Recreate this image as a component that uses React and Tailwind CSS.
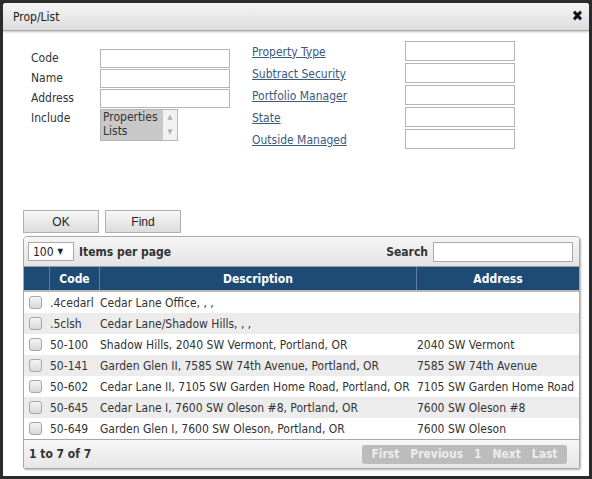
import React from "react";

const rows = [
  [".4cedarl", "Cedar Lane Office, , ,", ""],
  [".5clsh", "Cedar Lane/Shadow Hills, , ,", ""],
  ["50-100", "Shadow Hills, 2040 SW Vermont, Portland, OR", "2040 SW Vermont"],
  ["50-141", "Garden Glen II, 7585 SW 74th Avenue, Portland, OR", "7585 SW 74th Avenue"],
  ["50-602", "Cedar Lane II, 7105 SW Garden Home Road, Portland, OR", "7105 SW Garden Home Road"],
  ["50-645", "Cedar Lane I, 7600 SW Oleson #8, Portland, OR", "7600 SW Oleson #8"],
  ["50-649", "Garden Glen I, 7600 SW Oleson, Portland, OR", "7600 SW Oleson"],
];

const font = "font-['DejaVu_Sans_Condensed','DejaVu_Sans',sans-serif]";

function Input({ w }) {
  return <div className={`${w} h-[20px] border border-[#b5b5b5] bg-white`} />;
}

export default function App() {
  return (
    <div className={`w-[592px] h-[479px] bg-[#2b2b2b] p-[3px] ${font} text-[#333]`}>
      <div className="h-full bg-white flex flex-col rounded-t-[3px] overflow-hidden">
        {/* title bar */}
        <div className="h-[28px] shrink-0 flex items-center justify-between pl-[10px] pr-[6px] bg-gradient-to-b from-[#f5f5f5] to-[#dddddd] border-b border-[#a9a9a9] shadow-[0_1px_2px_rgba(0,0,0,0.25)]">
          <span className="text-[12px] text-[#222]">Prop/List</span>
          <span className="text-[15px] font-bold text-[#111] leading-none">✖</span>
        </div>

        {/* form */}
        <div className="flex h-[179px] shrink-0">
          <div className="pl-[28px] pt-[17px] flex flex-col gap-0">
            {["Code", "Name", "Address"].map((l) => (
              <div key={l} className="flex items-center h-[20px]">
                <span className="w-[69px] text-[12px]">{l}</span>
                <div className="w-[130px] h-[19px] border border-[#b5b5b5]" />
              </div>
            ))}
            <div className="flex items-start mt-[1px]">
              <span className="w-[69px] text-[12px] leading-[18px]">Include</span>
              <div className="w-[78px] h-[32px] border border-[#b5b5b5] flex">
                <div className="flex-1 bg-[#c8c8c8] text-[12px] leading-[14px] pl-[2px] text-[#333]">
                  <div>Properties</div>
                  <div>Lists</div>
                </div>
                <div className="w-[14px] bg-[#f1f1f1] flex flex-col items-center justify-between py-[4px] text-[7px] leading-none text-[#b0b0b0]">
                  <span>▲</span>
                  <span>▼</span>
                </div>
              </div>
            </div>
          </div>
          <div className="ml-[22px] pt-[10px] flex flex-col gap-[2px]">
            {["Property Type", "Subtract Security", "Portfolio Manager", "State", "Outside Managed"].map((l) => (
              <div key={l} className="flex items-center h-[20px]">
                <span className="w-[153px] text-[12px] text-[#3b5a7d] underline pt-[1px]">{l}</span>
                <Input w="w-[110px]" />
              </div>
            ))}
          </div>
        </div>

        {/* buttons */}
        <div className="flex gap-[6px] pl-[20px] shrink-0 font-['Liberation_Sans',sans-serif]">
          {["OK", "Find"].map((b) => (
            <div key={b} className="w-[76px] h-[23px] border border-[#b0b0b0] bg-gradient-to-b from-[#f7f7f7] to-[#dcdcdc] flex items-center justify-center text-[12px] text-[#222]">
              {b}
            </div>
          ))}
        </div>

        {/* grid panel */}
        <div className="ml-[20px] mt-[3px] w-[557px] h-[233px] border border-[#a8a8a8] rounded-t-[4px] rounded-b-[2px] shadow-[1px_1px_2px_rgba(0,0,0,0.3)] flex flex-col overflow-hidden">
          <div className="h-[30px] shrink-0 flex items-center justify-between px-[4px] bg-gradient-to-b from-[#f6f6f6] to-[#e4e4e4] border-b border-[#9a9a9a]">
            <div className="flex items-center gap-[5px]">
              <div className="w-[46px] h-[19px] border border-[#a9a9a9] bg-white flex items-center pl-[4px] text-[12px] text-[#222]">
                100 <span className="ml-[4px] text-[8px]">▼</span>
              </div>
              <span className="text-[12px] font-bold text-[#333]">Items per page</span>
            </div>
            <div className="flex items-center gap-[5px] pr-[2px]">
              <span className="text-[12px] font-bold text-[#333]">Search</span>
              <div className="w-[140px] h-[20px] border border-[#a9a9a9] bg-white" />
            </div>
          </div>
          <div className="h-[25px] shrink-0 grid grid-cols-[26px_50px_317px_1fr] bg-[#1e4b75] text-white text-[12px] font-bold border-b-[2px] border-[#b9b9b9]">
            <div className="border-r border-[#5f7f9e]" />
            <div className="border-r border-[#5f7f9e] flex items-center justify-center">Code</div>
            <div className="border-r border-[#5f7f9e] flex items-center justify-center">Description</div>
            <div className="flex items-center justify-center">Address</div>
          </div>
          <div className="flex flex-col">
            {rows.map((r, i) => (
              <div key={r[0]} className={`h-[21px] grid grid-cols-[26px_50px_317px_1fr] items-center text-[12px] text-[#333] ${i % 2 === 1 ? "bg-[#ececec]" : "bg-white"}`}>
                <div className="flex pl-[5px]">
                  <div className="w-[13px] h-[13px] rounded-[3px] border border-[#a6a6a6] bg-gradient-to-b from-[#f4f4f4] to-[#d8d8d8]" />
                </div>
                <div className="whitespace-nowrap">{r[0]}</div>
                <div className="whitespace-nowrap">{r[1]}</div>
                <div className="whitespace-nowrap">{r[2]}</div>
              </div>
            ))}
          </div>
          <div className="mt-auto h-[29px] shrink-0 flex items-center justify-between pl-[5px] pr-[12px] bg-gradient-to-b from-[#f7f7f7] to-[#e6e6e6] border-t border-[#a8a8a8]">
            <span className="text-[12px] font-bold text-[#333]">1 to 7 of 7</span>
            <div className="h-[19px] w-[205px] rounded-[3px] bg-[#bcbcbc] flex items-center justify-around px-[4px] text-[12px] font-bold text-[#ededed]">
              <span>First</span>
              <span>Previous</span>
              <span>1</span>
              <span>Next</span>
              <span>Last</span>
            </div>
          </div>
        </div>
      </div>
    </div>
  );
}
